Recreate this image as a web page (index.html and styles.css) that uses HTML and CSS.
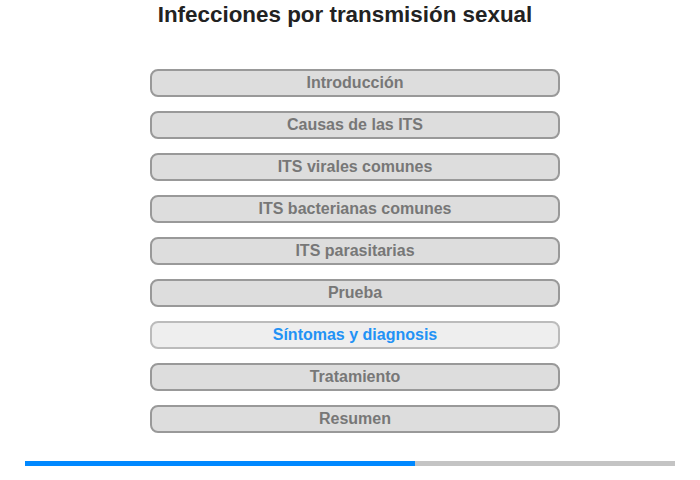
FILE: index.html
```html
<!DOCTYPE html>
<html lang="es">
<head>
    <meta charset="UTF-8">
    <meta name="viewport" content="width=device-width, initial-scale=1.0">
    <title>Infecciones por transmisión sexual</title>
    <link rel="stylesheet" href="styles.css">
</head>
<body>
    <h1 class="title">Infecciones por transmisión sexual</h1>
    <div class="menu">
        <button class="item">Introducción</button>
        <button class="item">Causas de las ITS</button>
        <button class="item">ITS virales comunes</button>
        <button class="item">ITS bacterianas comunes</button>
        <button class="item">ITS parasitarias</button>
        <button class="item">Prueba</button>
        <button class="item active">Síntomas y diagnosis</button>
        <button class="item">Tratamiento</button>
        <button class="item">Resumen</button>
    </div>
    <div class="progress">
        <div class="progress-fill" style="width: 60%"></div>
    </div>
</body>
</html>
```

FILE: styles.css
```css
body {
    margin: 0;
    background-color: #fff;
    font-family: "Liberation Sans", Arial, sans-serif;
}
.title {
    margin: 0;
    padding: 2px 10px 0 0;
    font-size: 22.4px;
    line-height: 25px;
    font-weight: bold;
    color: #222;
    text-align: center;
}
.menu {
    display: flex;
    flex-direction: column;
    align-items: center;
    gap: 14px;
    margin-top: 42px;
    padding-left: 10px;
}
.item {
    width: 410px;
    height: 28px;
    padding: 0;
    background-color: #ddd;
    border: 2px solid #999;
    border-radius: 8px;
    font-family: "Liberation Sans", Arial, sans-serif;
    font-size: 16px;
    font-weight: bold;
    color: #777;
    cursor: pointer;
}
.item.active {
    background-color: #eee;
    border-color: #bbb;
    color: #2292f5;
}
.progress {
    height: 5px;
    margin: 28px 25px 0;
    background-color: #c4c4c4;
}
.progress-fill {
    height: 100%;
    background-color: #0088ff;
}
```
